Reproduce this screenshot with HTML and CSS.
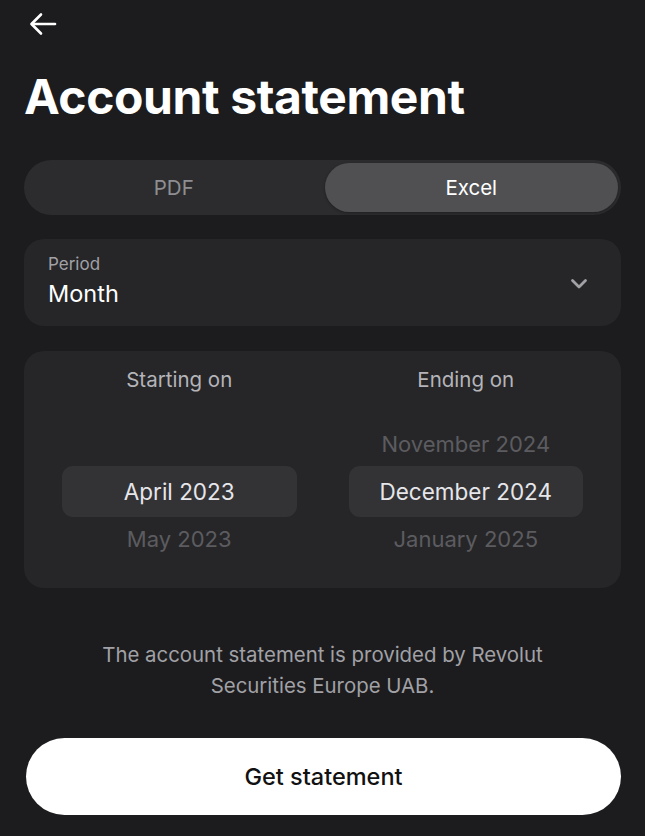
FILE: index.html
```html
<!DOCTYPE html>
<html lang="en">
<head>
<meta charset="utf-8">
<title>Account statement</title>
<link rel="stylesheet" href="styles.css">
</head>
<body>
<main class="screen">
  <header class="topbar">
    <button class="back" aria-label="Back">
      <svg width="28" height="24" viewBox="0 0 28 24" fill="none" stroke="#fff" stroke-width="2.6" stroke-linecap="round" stroke-linejoin="round">
        <path d="M26 12H3"/>
        <path d="M12 2.5L2.5 12L12 21.5"/>
      </svg>
    </button>
  </header>

  <h1 class="title">Account statement</h1>

  <div class="segmented">
    <button class="seg">PDF</button>
    <button class="seg seg-active">Excel</button>
  </div>

  <div class="card period">
    <div class="period-text">
      <span class="period-label">Period</span>
      <span class="period-value">Month</span>
    </div>
    <svg class="chevron" width="18" height="12" viewBox="0 0 18 12" fill="none" stroke="#a1a1a6" stroke-width="2.8" stroke-linecap="round" stroke-linejoin="round">
      <path d="M2.5 2.5L9 9L15.5 2.5"/>
    </svg>
  </div>

  <div class="card picker">
    <div class="picker-col">
      <div class="picker-head">Starting on</div>
      <div class="wheel">
        <div class="wheel-item"></div>
        <div class="wheel-item wheel-selected">April 2023</div>
        <div class="wheel-item">May 2023</div>
      </div>
    </div>
    <div class="picker-col">
      <div class="picker-head">Ending on</div>
      <div class="wheel">
        <div class="wheel-item">November 2024</div>
        <div class="wheel-item wheel-selected">December 2024</div>
        <div class="wheel-item">January 2025</div>
      </div>
    </div>
  </div>

  <p class="note">The account statement is provided by Revolut Securities Europe UAB.</p>

  <button class="primary">Get statement</button>
</main>
</body>
</html>
```

FILE: styles.css
```css
* {
  box-sizing: border-box;
}

html, body {
  margin: 0;
  background: #1c1c1e;
}

body {
  font-family: Inter, "Noto Sans", "Liberation Sans", sans-serif;
  color: #fff;
  -webkit-font-smoothing: antialiased;
}

.screen {
  width: 645px;
  height: 836px;
  padding: 0 24px;
  display: flex;
  flex-direction: column;
  overflow: hidden;
}

button {
  font-family: inherit;
  border: none;
  background: none;
  padding: 0;
  cursor: pointer;
}

.topbar {
  height: 48px;
  display: flex;
  align-items: center;
}

.back {
  width: 34px;
  height: 30px;
  margin-left: 5px;
  display: flex;
  align-items: center;
}

.title {
  margin: 21px 0 0 0;
  font-size: 48px;
  font-weight: 700;
  letter-spacing: -0.4px;
  line-height: 56px;
}

.segmented {
  margin-top: 35px;
  height: 55px;
  border-radius: 28px;
  background: #2c2c2e;
  padding: 3px;
  display: flex;
}

.seg {
  flex: 1;
  border-radius: 25px;
  font-size: 20.5px;
  color: #8e8e93;
}

.seg-active {
  margin-left: 4px;
  background: #505053;
  color: #fff;
  box-shadow: 0 1px 3px rgba(0, 0, 0, 0.3);
}

.card {
  background: #262628;
  border-radius: 20px;
}

.period {
  margin-top: 24px;
  height: 87px;
  padding: 0 33px 0 24px;
  display: flex;
  align-items: center;
  justify-content: space-between;
}

.period-text {
  display: flex;
  flex-direction: column;
}

.period-label {
  font-size: 17px;
  color: #a1a1a6;
  line-height: 22px;
  margin-top: -3px;
}

.period-value {
  font-size: 23.5px;
  line-height: 30px;
  margin-top: 4px;
}

.chevron {
  margin-top: 3px;
}

.picker {
  margin-top: 25px;
  height: 237px;
  padding: 15px 38px 0;
  display: flex;
  gap: 52px;
}

.picker-col {
  flex: 1;
  display: flex;
  flex-direction: column;
}

.picker-head {
  text-align: center;
  font-size: 20.5px;
  color: #b4b4b9;
  line-height: 28px;
}

.wheel {
  margin-top: 28px;
  display: flex;
  flex-direction: column;
}

.wheel-item {
  height: 44px;
  display: flex;
  align-items: center;
  justify-content: center;
  font-size: 22px;
  color: #5c5c60;
}

.wheel-selected {
  height: 51px;
  border-radius: 11px;
  background: #333336;
  color: #e6e6ea;
  font-size: 22.5px;
}

.note {
  margin: 51px 40px 0;
  text-align: center;
  font-size: 20.4px;
  line-height: 31px;
  color: #a1a1a6;
}

.primary {
  margin: 37px 0 0 2px;
  height: 77px;
  border-radius: 39px;
  background: #fff;
  color: #111;
  font-size: 23.5px;
  font-weight: 500;
}
```
